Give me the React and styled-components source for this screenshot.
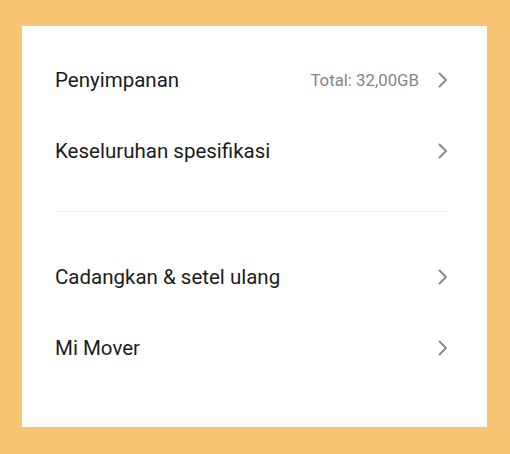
import React from "react";
import styled, { createGlobalStyle } from "styled-components";

const GlobalStyle = createGlobalStyle`
  html, body {
    margin: 0;
    padding: 0;
    background: #f8c575;
  }
  body {
    font-family: Roboto, "Liberation Sans", sans-serif;
  }
`;

const Page = styled.div`
  width: 510px;
  height: 454px;
  padding: 26px 23px 27px 22px;
  box-sizing: border-box;
`;

const Card = styled.div`
  background: #ffffff;
  height: 100%;
  padding: 18px 39px 0 33px;
  box-sizing: border-box;
  display: flex;
  flex-direction: column;
`;

const Row = styled.div`
  height: 71px;
  display: flex;
  align-items: center;
  justify-content: space-between;
`;

const Label = styled.span`
  font-size: 20.5px;
  color: #1c1c1c;
`;

const Right = styled.div`
  display: flex;
  align-items: center;
  gap: 19px;
`;

const Value = styled.span`
  font-size: 16.8px;
  color: #858585;
`;

const Divider = styled.div`
  height: 1px;
  background: #f2f2f2;
  margin: 25px 0 29px;
`;

const Chevron = () => (
  <svg width="10" height="16" viewBox="0 0 10 16">
    <path
      d="M1.5 1.5 L8 8 L1.5 14.5"
      fill="none"
      stroke="#8a8a8a"
      strokeWidth="2"
      strokeLinecap="round"
      strokeLinejoin="round"
    />
  </svg>
);

const Item = ({ label, value }) => (
  <Row>
    <Label>{label}</Label>
    <Right>
      {value && <Value>{value}</Value>}
      <Chevron />
    </Right>
  </Row>
);

export default function App() {
  return (
    <>
      <GlobalStyle />
      <Page>
        <Card>
          <Item label="Penyimpanan" value="Total: 32,00GB" />
          <Item label="Keseluruhan spesifikasi" />
          <Divider />
          <Item label="Cadangkan & setel ulang" />
          <Item label="Mi Mover" />
        </Card>
      </Page>
    </>
  );
}
